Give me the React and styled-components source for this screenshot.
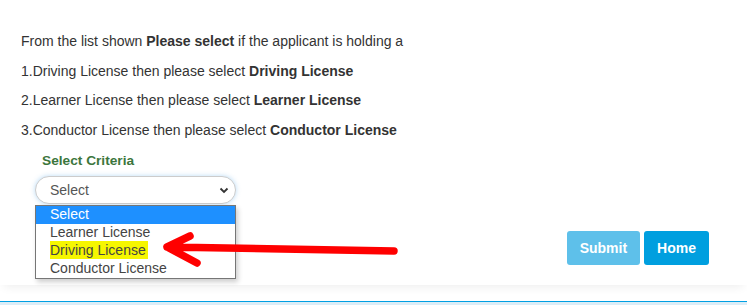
import styled, { createGlobalStyle } from 'styled-components';

const GlobalStyle = createGlobalStyle`
  html, body { margin: 0; padding: 0; background: #fff; }
  body { font-family: "Liberation Sans", Arial, sans-serif; font-size: 14px; color: #333; }
`;

const options = ['Select', 'Learner License', 'Driving License', 'Conductor License'];

const App = () => {
  return (
    <Page>
      <GlobalStyle />
      <Panel>
        <Line>From the list shown <b>Please select</b> if the applicant is holding a</Line>
        <Line>1.Driving License then please select <b>Driving License</b></Line>
        <Line>2.Learner License then please select <b>Learner License</b></Line>
        <Line>3.Conductor License then please select <b>Conductor License</b></Line>
        <FormGroup>
          <Label>Select Criteria</Label>
          <SelectWrap>
            <SelectBox>
              <span>Select</span>
              <svg width="10" height="7" viewBox="0 0 10 7">
                <path d="M1.5 1.5 L5 5 L8.5 1.5" fill="none" stroke="#333" strokeWidth="1.8" />
              </svg>
            </SelectBox>
            <DropList>
              {options.map((o, i) => (
                <Option key={o} active={i === 0}>
                  {i === 2 ? <Marked>{o}</Marked> : o}
                </Option>
              ))}
            </DropList>
          </SelectWrap>
        </FormGroup>
        <ButtonRow>
          <Button light>Submit</Button>
          <Button>Home</Button>
        </ButtonRow>
      </Panel>
      <Footer />
      {/* hand drawn red arrow pointing at the option */}
      <Arrow width="747" height="305" viewBox="0 0 747 305">
        <path
          d="M394 251 L167 247 M190 236 L167 247 L197 263"
          fill="none"
          stroke="#ff0000"
          strokeWidth="7.5"
          strokeLinecap="round"
          strokeLinejoin="round"
        />
      </Arrow>
    </Page>
  );
};

const Page = styled.div`
  position: relative;
  width: 747px;
  height: 305px;
  overflow: hidden;
`;

const Panel = styled.div`
  padding: 31px 38px 20px 21px;
  box-shadow: 0 6px 9px -4px rgba(0, 0, 0, 0.07);
`;

const Line = styled.p`
  margin: 0 0 9.7px;
  line-height: 20px;
  b { font-weight: bold; color: #333; }
`;

const FormGroup = styled.div`
  padding-left: 14px;
  margin-top: 11px;
`;

const Label = styled.div`
  padding-left: 7px;
  line-height: 20px;
  font-size: 13.7px;
  font-weight: bold;
  color: #3c763d;
  margin-bottom: 5px;
`;

const SelectWrap = styled.div`
  position: relative;
  width: 201px;
`;

const SelectBox = styled.div`
  box-sizing: border-box;
  height: 28px;
  border: 1px solid #ccc;
  border-radius: 14px;
  box-shadow: 0 0 5px rgba(102, 175, 233, 0.45);
  display: flex;
  align-items: center;
  justify-content: space-between;
  padding: 0 6px 0 14px;
  color: #555;
  background: #fff;
`;

const DropList = styled.div`
  position: absolute;
  top: 29px;
  left: 0;
  width: 201px;
  box-sizing: border-box;
  border: 1px solid #767676;
  background: #fff;
  box-shadow: 2px 3px 5px rgba(0, 0, 0, 0.2);
  z-index: 2;
`;

const Option = styled.div`
  height: 18px;
  line-height: 17px;
  padding-left: 14px;
  color: ${(p) => (p.active ? '#fff' : '#444')};
  background: ${(p) => (p.active ? '#1e90ff' : 'transparent')};
`;

const Marked = styled.span`
  background: #f6f600;
  padding: 1px 2px 1px 0;
`;

const ButtonRow = styled.div`
  display: flex;
  justify-content: flex-end;
  gap: 4px;
  margin-top: 27px;
`;

const Button = styled.button`
  height: 34px;
  padding: 0 13px;
  border: none;
  border-radius: 3px;
  font-family: "Liberation Sans", Arial, sans-serif;
  font-size: 14px;
  font-weight: bold;
  color: #fff;
  background: ${(p) => (p.light ? '#5ec0ea' : '#009fdf')};
`;

const Footer = styled.div`
  margin-top: 16px;
  border-top: 1px solid #00a0e3;
  height: 10px;
  background: #dcedf7;
`;

const Arrow = styled.svg`
  position: absolute;
  top: 0;
  left: 0;
  pointer-events: none;
  z-index: 3;
`;

export default App;
